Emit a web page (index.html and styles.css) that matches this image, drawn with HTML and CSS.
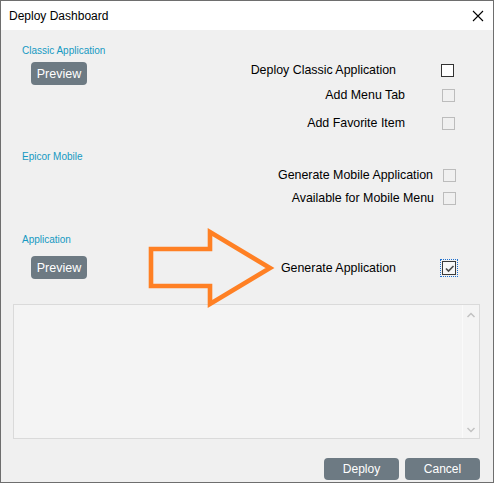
FILE: index.html
```html
<!DOCTYPE html>
<html lang="en">
<head>
<meta charset="UTF-8">
<meta name="viewport" content="width=device-width, initial-scale=1.0">
<title>Deploy Dashboard</title>
<link rel="stylesheet" href="styles.css">
</head>
<body>
    <div class="dialog">
        <div class="title-bar">
            <span class="title">Deploy Dashboard</span>
            <svg class="close" width="12" height="12" viewBox="0 0 12 12">
                <path d="M1 1 L11 11 M11 1 L1 11" stroke="#000" stroke-width="1.1" fill="none"/>
            </svg>
        </div>

        <div class="content">
            <!-- Classic Application -->
            <div class="section section-classic">
                <div class="left">
                    <div class="section-label">Classic Application</div>
                    <button class="preview-btn">Preview</button>
                </div>
                <div class="options">
                    <div class="option row1">
                        <span class="opt-label">Deploy Classic Application</span>
                        <span class="check"></span>
                    </div>
                    <div class="option row2">
                        <span class="opt-label">Add Menu Tab</span>
                        <span class="check disabled"></span>
                    </div>
                    <div class="option row3">
                        <span class="opt-label">Add Favorite Item</span>
                        <span class="check disabled"></span>
                    </div>
                </div>
            </div>

            <!-- Epicor Mobile -->
            <div class="section section-mobile">
                <div class="left">
                    <div class="section-label">Epicor Mobile</div>
                </div>
                <div class="options">
                    <div class="option row4">
                        <span class="opt-label">Generate Mobile Application</span>
                        <span class="check disabled"></span>
                    </div>
                    <div class="option row5">
                        <span class="opt-label">Available for Mobile Menu</span>
                        <span class="check disabled"></span>
                    </div>
                </div>
            </div>

            <!-- Application -->
            <div class="section section-app">
                <div class="left">
                    <div class="section-label">Application</div>
                    <button class="preview-btn">Preview</button>
                </div>
                <div class="options">
                    <div class="option row6">
                        <span class="opt-label">Generate Application</span>
                        <span class="check checked focused">
                            <svg width="11" height="11" viewBox="0 0 11 11">
                                <path d="M2 5.5 L4.5 8 L9.5 3" stroke="#4a4a4a" stroke-width="1.6" fill="none"/>
                            </svg>
                        </span>
                    </div>
                </div>
            </div>

            <div class="log-box">
                <div class="log-text"></div>
                <div class="scrollbar">
                    <svg width="10" height="6" viewBox="0 0 10 6">
                        <path d="M1.5 5 L5 1.5 L8.5 5" stroke="#c2c2c2" stroke-width="1.5" fill="none"/>
                    </svg>
                    <svg width="10" height="6" viewBox="0 0 10 6">
                        <path d="M1.5 1 L5 4.5 L8.5 1" stroke="#c2c2c2" stroke-width="1.5" fill="none"/>
                    </svg>
                </div>
            </div>

            <div class="footer">
                <button class="footer-btn">Deploy</button>
                <button class="footer-btn">Cancel</button>
            </div>
        </div>

        <!-- annotation arrow drawn over the dialog -->
        <svg class="arrow" width="140" height="92" viewBox="140 222 140 92">
            <polygon points="151,249 210,249 210,232 270,268 210,304 210,286 151,286"
                     fill="none" stroke="#ff8024" stroke-width="4.6" stroke-linejoin="miter"/>
        </svg>
    </div>
</body>
</html>
```

FILE: styles.css
```css
body {
    margin: 0;
    padding: 0;
    font-family: "Liberation Sans", Arial, sans-serif;
    background-color: #f0f0f0;
}

.dialog {
    position: relative;
    width: 494px;
    height: 483px;
    box-sizing: border-box;
    border: 1px solid #6e6e6e;
    background-color: #f0f0f0;
}

.title-bar {
    height: 29px;
    background-color: #fff;
    display: flex;
    align-items: center;
    justify-content: space-between;
    padding: 0 9px 0 8px;
}

.title {
    font-size: 12px;
    color: #000;
}

.close {
    display: block;
}

.content {
    padding: 0 13px 0 12px;
}

.section {
    display: grid;
    grid-template-columns: 200px 1fr;
    padding-right: 24px;
}

.section-classic {
    padding-top: 15px;
}

.section-mobile {
    margin-top: 18px;
}

.section-app {
    margin-top: 26px;
}

.left {
    padding-left: 9px;
}

.section-label {
    font-size: 10px;
    line-height: 12px;
    color: #1599c2;
}

.preview-btn {
    display: block;
    margin: 5px 0 0 9px;
    width: 56px;
    height: 23px;
    padding: 0;
    border: none;
    border-radius: 4px;
    background-color: #6d7a83;
    color: #fff;
    font-family: "Liberation Sans", Arial, sans-serif;
    font-size: 12.5px;
}

.section-app .preview-btn {
    margin-top: 10px;
}

.option {
    display: flex;
    justify-content: flex-end;
    align-items: center;
    height: 20px;
}

.opt-label {
    font-size: 12.4px;
    color: #000;
}

.check {
    width: 13px;
    height: 13px;
    box-sizing: border-box;
    border: 1px solid #333;
    background-color: #fff;
    display: flex;
    align-items: center;
    justify-content: center;
}

.check.disabled {
    border-color: #bcbcbc;
    background-color: #f0f0f0;
}

.check.checked {
    width: 14px;
    height: 14px;
    border-color: #3a3a3a;
    background-color: #f7f7f7;
}

.check.focused {
    outline: 1px dotted #1d6fcf;
    outline-offset: 1px;
}

.section-classic .options {
    margin-top: 15px;
}

.row1 .opt-label { margin-right: 45px; }
.row1 .check { margin-right: 2px; }

.row2 { margin-top: 5px; }
.row2 .opt-label { margin-right: 37px; }
.row2 .check { margin-right: 1px; }

.row3 { margin-top: 8px; }
.row3 .opt-label { margin-right: 37px; }
.row3 .check { margin-right: 1px; }

.section-mobile .options {
    margin-top: 14px;
}

.row4 .opt-label { margin-right: 10px; }
.row5 { margin-top: 3px; }
.row5 .opt-label { margin-right: 9px; }

.section-app .options {
    margin-top: 24px;
}

.row6 .opt-label { margin-right: 46px; }

.log-box {
    margin-top: 25px;
    height: 135px;
    box-sizing: border-box;
    border: 1px solid #dadada;
    background-color: #f4f4f4;
    display: flex;
}

.log-text {
    flex: 1;
}

.scrollbar {
    width: 16px;
    display: flex;
    flex-direction: column;
    justify-content: space-between;
    align-items: center;
    padding: 7px 0 5px;
    border-left: 1px solid #fafafa;
}

.footer {
    margin-top: 19px;
    display: flex;
    justify-content: flex-end;
    gap: 6px;
}

.footer-btn {
    width: 75px;
    height: 22px;
    padding: 0;
    border: none;
    border-radius: 4px;
    background-color: #6d7a83;
    color: #fff;
    font-family: "Liberation Sans", Arial, sans-serif;
    font-size: 12px;
}

.arrow {
    position: absolute;
    left: 139px;
    top: 221px;
}
```
